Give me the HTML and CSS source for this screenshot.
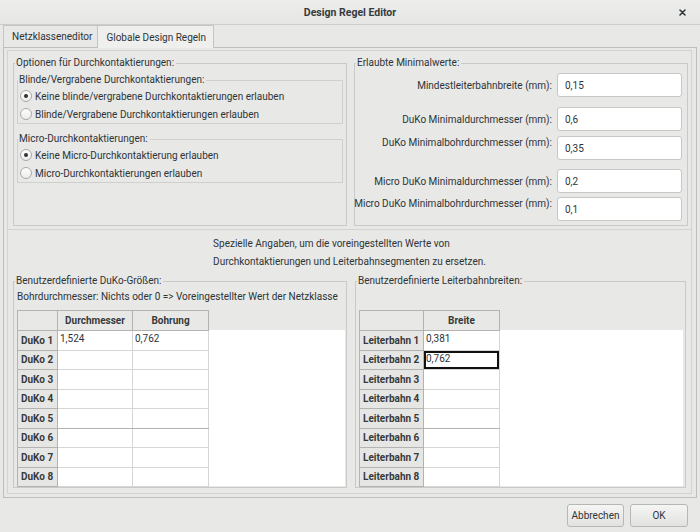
FILE: index.html
```html
<!DOCTYPE html>
<html lang="de">
<head>
<meta charset="utf-8">
<title>Design Regel Editor</title>
<link rel="stylesheet" href="styles.css">
</head>
<body>
<div class="titlebar">
  <span></span>
  <span class="title">Design Regel Editor</span>
  <span class="close"><svg width="7" height="7" viewBox="0 0 7 7"><path d="M1 1L6 6M6 1L1 6" stroke="#2e3436" stroke-width="1.5" stroke-linecap="round"/></svg></span>
</div>
<div class="tabs">
  <div class="tab">Netzklasseneditor</div>
  <div class="tab active">Globale Design Regeln</div>
</div>
<div class="panel">
  <div class="frame">
    <div class="top">
      <fieldset class="group g-opts">
        <legend>Optionen für Durchkontaktierungen:</legend>
        <fieldset class="sub">
          <legend>Blinde/Vergrabene Durchkontaktierungen:</legend>
          <div class="radio"><span class="rb on"></span>Keine blinde/vergrabene Durchkontaktierungen erlauben</div>
          <div class="radio"><span class="rb"></span>Blinde/Vergrabene Durchkontaktierungen erlauben</div>
        </fieldset>
        <fieldset class="sub sub2">
          <legend>Micro-Durchkontaktierungen:</legend>
          <div class="radio"><span class="rb on"></span>Keine Micro-Durchkontaktierung erlauben</div>
          <div class="radio"><span class="rb"></span>Micro-Durchkontaktierungen erlauben</div>
        </fieldset>
      </fieldset>
      <fieldset class="group g-min">
        <legend>Erlaubte Minimalwerte:</legend>
        <div class="row r1"><span class="lbl">Mindestleiterbahnbreite (mm):</span><span class="inp">0,15</span></div>
        <div class="row r2"><span class="lbl">DuKo Minimaldurchmesser (mm):</span><span class="inp">0,6</span></div>
        <div class="row r3 topal"><span class="lbl">DuKo Minimalbohrdurchmesser (mm):</span><span class="inp">0,35</span></div>
        <div class="row r4"><span class="lbl">Micro DuKo Minimaldurchmesser (mm):</span><span class="inp">0,2</span></div>
        <div class="row r5 topal"><span class="lbl">Micro DuKo Minimalbohrdurchmesser (mm):</span><span class="inp">0,1</span></div>
      </fieldset>
    </div>
    <p class="note">Spezielle Angaben, um die voreingestellten Werte von<br>Durchkontaktierungen und Leiterbahnsegmenten zu ersetzen.</p>
    <div class="bottom">
      <fieldset class="group g-vias">
        <legend>Benutzerdefinierte DuKo-Größen:</legend>
        <p class="hint">Bohrdurchmesser: Nichts oder 0 =&gt; Voreingestellter Wert der Netzklasse</p>
        <div class="grid">
          <table>
            <colgroup><col class="c-rh1"><col class="c-d1"><col class="c-d2"></colgroup>
            <tr class="hdr"><th class="corner"></th><th>Durchmesser</th><th>Bohrung</th></tr>
            <tr><th class="rh">DuKo 1</th><td>1,524</td><td>0,762</td></tr>
            <tr><th class="rh">DuKo 2</th><td></td><td></td></tr>
            <tr><th class="rh">DuKo 3</th><td></td><td></td></tr>
            <tr><th class="rh">DuKo 4</th><td></td><td></td></tr>
            <tr class="mid"><th class="rh">DuKo 5</th><td></td><td></td></tr>
            <tr><th class="rh">DuKo 6</th><td></td><td></td></tr>
            <tr><th class="rh">DuKo 7</th><td></td><td></td></tr>
            <tr><th class="rh">DuKo 8</th><td></td><td></td></tr>
          </table>
        </div>
      </fieldset>
      <fieldset class="group g-tracks">
        <legend>Benutzerdefinierte Leiterbahnbreiten:</legend>
        <div class="grid">
          <table>
            <colgroup><col class="c-rh2"><col class="c-d2"></colgroup>
            <tr class="hdr"><th class="corner"></th><th>Breite</th></tr>
            <tr><th class="rh">Leiterbahn 1</th><td>0,381</td></tr>
            <tr><th class="rh">Leiterbahn 2</th><td class="sel">0,762</td></tr>
            <tr><th class="rh">Leiterbahn 3</th><td></td></tr>
            <tr><th class="rh">Leiterbahn 4</th><td></td></tr>
            <tr class="mid"><th class="rh">Leiterbahn 5</th><td></td></tr>
            <tr><th class="rh">Leiterbahn 6</th><td></td></tr>
            <tr><th class="rh">Leiterbahn 7</th><td></td></tr>
            <tr><th class="rh">Leiterbahn 8</th><td></td></tr>
          </table>
        </div>
      </fieldset>
    </div>
  </div>
</div>
<div class="buttons">
  <button class="btn b-cancel">Abbrechen</button>
  <button class="btn b-ok">OK</button>
</div>
</body>
</html>
```
FILE: styles.css
```css
* { box-sizing: border-box; }
html, body { margin: 0; padding: 0; }
body {
  width: 700px;
  height: 532px;
  overflow: hidden;
  background: #e8e8e7;
  font-family: Roboto, "Liberation Sans", sans-serif;
  font-size: 10px;
  color: #2e3436;
}

/* title bar */
.titlebar {
  height: 25px;
  display: grid;
  grid-template-columns: 1fr auto 1fr;
  align-items: center;
  background: linear-gradient(#ededec, #e6e6e5);
  border-bottom: 1px solid #cdcdcc;
}
.title { font-weight: bold; font-size: 10.5px; color: #363a3b; }
.close { justify-self: end; margin-right: 14px; display: flex; }

/* tabs */
.tabs {
  display: flex;
  height: 22px;
  padding: 0 3px;
}
.tab {
  display: flex;
  align-items: center;
  padding: 0 5px 0 8px;
  border: 1px solid #c4c4c3;
  border-bottom: none;
  background: #e8e8e7;
}
.tab + .tab { border-left: none; }
.tab.active {
  position: relative;
  z-index: 1;
  background: #efefee;
  padding: 0 7px 0 8px;
  height: 23px;
}

.panel {
  margin: 0 3px;
  height: 451px;
  border: 1px solid #bdbdbc;
  padding: 2px 4px 3px 3px;
  background: #e8e8e7;
}
.frame {
  height: 100%;
  border: 1px solid #d3d3d2;
}

/* group boxes */
fieldset { margin: 0; min-width: 0; }
.group {
  border: 1px solid #c9c9c8;
  padding: 0 3px 4px 3px;
}
legend {
  padding: 0 2px 0 1px;
  margin-left: -2px;
  line-height: 14px;
  white-space: nowrap;
}

.top {
  display: flex;
  gap: 7px;
  padding: 5px 3px 3px 5px;
  border-bottom: 1px solid #d3d3d2;
}
.g-opts { width: 334px; flex: none; }
.g-min { flex: 1; padding: 0 5px 4px 3px; }

.sub {
  border: 1px solid #cfcfce;
  padding: 0 2px 0 2px;
  margin-top: 3px;
}
.sub2 { margin-top: 8px; }
.radio {
  height: 18px;
  display: flex;
  align-items: center;
  white-space: nowrap;
}
.rb {
  width: 12px;
  height: 12px;
  border-radius: 50%;
  border: 1px solid #a9a9a8;
  background: linear-gradient(#fdfdfd, #ececeb);
  margin-right: 3px;
  display: flex;
  align-items: center;
  justify-content: center;
}
.rb.on::after {
  content: "";
  width: 4px;
  height: 4px;
  border-radius: 50%;
  background: #2e3436;
}

.row {
  display: flex;
  align-items: center;
  justify-content: flex-end;
  gap: 5px;
}
.row.topal { align-items: flex-start; }
.r1 { margin-top: 3px; }
.r2 { margin-top: 10px; }
.r3 { margin-top: 5px; }
.r4 { margin-top: 9px; }
.r5 { margin-top: 4px; }
.lbl { line-height: 13px; white-space: nowrap; }
.inp {
  width: 125px;
  height: 24px;
  flex: none;
  border: 1px solid #c6c6c5;
  border-radius: 3px;
  background: #fff;
  padding: 0 7px;
  display: flex;
  align-items: center;
}

.note {
  margin: 5px auto 0;
  width: fit-content;
  line-height: 18px;
}

.bottom {
  display: flex;
  gap: 8px;
  padding: 3px 5px 0 5px;
}
.g-vias { width: 334px; flex: none; padding: 0 1px 1px 3px; }
.g-tracks { flex: 1; padding: 0 2px 1px 3px; }
.hint { margin: 2px 0 6px; line-height: 14px; white-space: nowrap; }
.g-tracks .grid { margin-top: 22px; }

.grid {
  height: 176px;
  background: linear-gradient(to bottom, transparent 20px, #fff 20px);
}
table {
  border-collapse: collapse;
  table-layout: fixed;
}
.c-rh1 { width: 40px; }
.c-rh2 { width: 64px; }
.c-d1 { width: 75px; }
.c-d2 { width: 76px; }
tr { height: 19.5px; }
tr.hdr { height: 20px; }
th {
  background: #e8e8e7;
  border: 1px solid #b3b3b2;
  font-weight: bold;
  padding: 0;
  color: #363a3b;
  white-space: nowrap;
}
th.rh {
  text-align: left;
  padding-left: 3px;
  background: #e6e6e5;
}
td {
  border: 1px solid #d6d6d5;
  background: #fff;
  padding: 1px 2px 0;
  vertical-align: top;
  line-height: 14px;
}
tr.mid td, tr.mid th { border-bottom-color: #b3b3b2; }
td.sel { box-shadow: inset 0 0 0 2px #111; }

.buttons {
  display: flex;
  justify-content: flex-end;
  gap: 6px;
  padding: 6px 12px 0 0;
}
.btn {
  height: 23px;
  border: 1px solid #b7b7b6;
  border-radius: 3px;
  background: linear-gradient(#f5f5f4, #e2e2e1);
  font-family: inherit;
  font-size: 10px;
  color: #2e3436;
  padding: 0;
}
.b-cancel { width: 57px; }
.b-ok { width: 58px; }
```
